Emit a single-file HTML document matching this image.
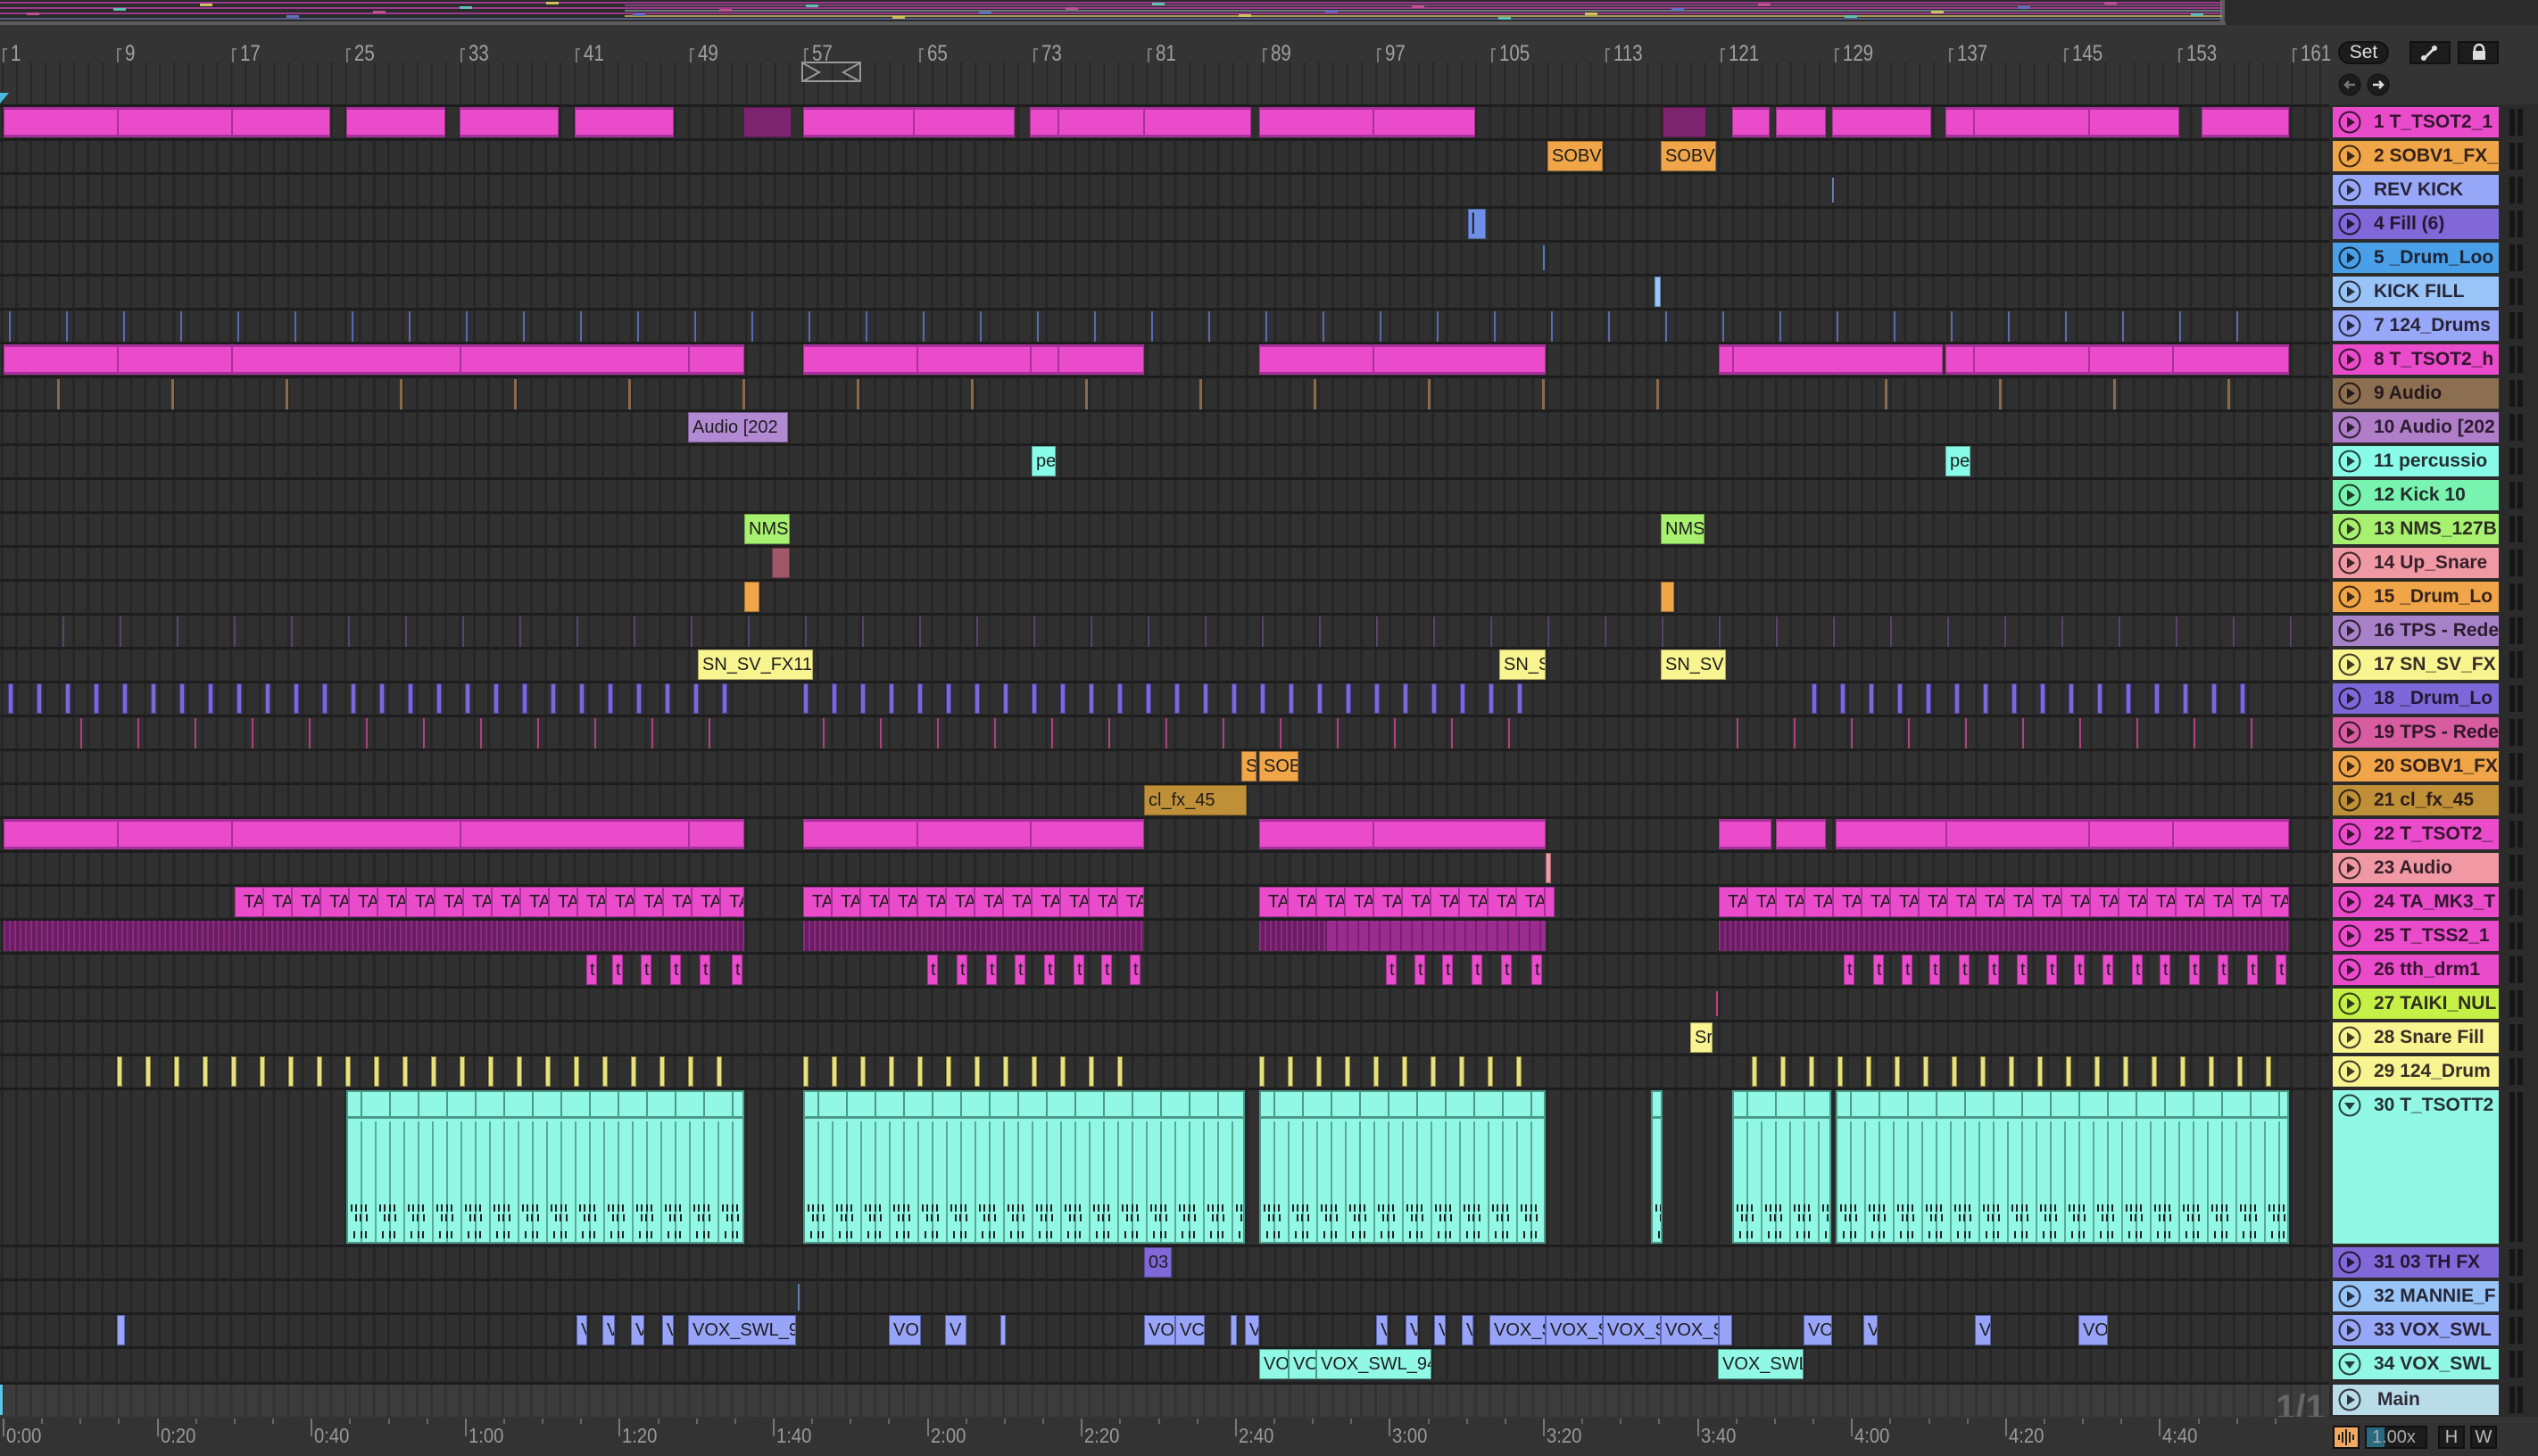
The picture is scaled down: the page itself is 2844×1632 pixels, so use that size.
<!DOCTYPE html>
<html><head><meta charset="utf-8">
<style>
*{margin:0;padding:0;box-sizing:border-box}
body{width:2844px;height:1632px;background:#2b2b2b;position:relative;overflow:hidden;font-family:"Liberation Sans",sans-serif}
.a{position:absolute}
.row{position:absolute;left:0;width:2610px;background-color:#303030;border-top:3px solid #1d1d1d;
 background-image:linear-gradient(90deg,#262626 0 3px,transparent 3px);background-size:16.04px 100%;background-position:1px 0}
.clip{position:absolute;overflow:hidden;white-space:nowrap;font-size:20px;color:#1c1c1c;line-height:32px;padding-left:4px;border:1px solid rgba(0,0,0,.3)}
.hd{position:absolute;left:2614px;width:186px;height:34px;font-weight:bold;font-size:21px;color:rgba(20,10,20,.85);line-height:34px;padding-left:46px;white-space:nowrap;overflow:hidden;letter-spacing:0}
.hd svg{position:absolute;left:5px;top:4px}
.mt{position:absolute;left:2812px;width:15px;height:30px;border-left:6px solid #161616;border-right:6px solid #161616}
.rn{position:absolute;top:46px;font-size:25px;color:#a0a0a0;transform:scaleX(.82);transform-origin:left}
.tk{position:absolute;width:2px;background:#777}
.tl{position:absolute;top:1596px;font-size:23px;color:#999;transform:scaleX(.88);transform-origin:left}
.btn{position:absolute;background:#1c1c1c;border:2px solid #111;color:#bbb;font-size:20px;text-align:center;line-height:22px}
</style></head><body>
<div class="a" style="left:0;top:0;width:2490px;height:24px;background:#2a2a2a"></div>
<div class="a" style="left:0;top:24px;width:2494px;height:4px;background:#5c5c5c"></div>
<div class="a" style="left:2488px;top:0;width:5px;height:26px;background:#5c5c5c;border-radius:0 0 6px 0"></div>
<div class="a" style="left:0;top:28px;width:2614px;height:90px;background:#343434"></div>
<div class="a" style="left:0;top:70px;width:2610px;height:47px;background-image:linear-gradient(90deg,#282828 0 2px,transparent 2px);background-size:16.04px 100%;background-position:2px 0"></div>
<svg class="a" style="left:898px;top:69px" width="68" height="24"><rect x="1" y="1" width="65" height="21" fill="none" stroke="#999" stroke-width="2"/><path d="M2 2 L20 12 L2 22 M65 2 L47 12 L65 22" fill="none" stroke="#999" stroke-width="2"/></svg>
<svg class="a" style="left:0;top:104px" width="10" height="12"><path d="M0 0 L10 0 L0 12Z" fill="#4ab8d8"/></svg>
<div class="a" style="left:2614px;top:28px;width:230px;height:89px;background:#343434"></div>
<div class="btn" style="left:2620px;top:46px;width:57px;height:26px;border-radius:13px;color:#ddd;font-size:21px">Set</div>
<div class="btn" style="left:2700px;top:46px;width:46px;height:26px"><svg width="40" height="22"><path d="M14 17 L24 7" stroke="#ddd" stroke-width="3"/><circle cx="13" cy="17" r="3" fill="#ddd"/><circle cx="25" cy="6" r="3" fill="#ddd"/></svg></div>
<div class="btn" style="left:2754px;top:46px;width:46px;height:26px"><svg width="40" height="22"><rect x="14" y="9" width="14" height="10" fill="#ddd"/><path d="M16 10 V7 a5 5 0 0 1 10 0 V10" fill="none" stroke="#ddd" stroke-width="2.5"/></svg></div>
<svg class="a" style="left:2620px;top:82px" width="60" height="27"><circle cx="13" cy="13" r="12" fill="#1c1c1c" stroke="#111"/><path d="M19 13 H8 M12 9 L8 13 L12 17" stroke="#777" stroke-width="2.5" fill="none"/><circle cx="45" cy="13" r="12" fill="#1c1c1c" stroke="#111"/><path d="M39 13 H50 M46 9 L50 13 L46 17" stroke="#ddd" stroke-width="2.5" fill="none"/></svg>
<div class="a" style="left:0;top:1549px;width:2610px;height:39px;background-color:#3c3c3c;border-top:3px solid #1d1d1d;background-image:linear-gradient(90deg,#333 0 3px,transparent 3px);background-size:16.04px 100%;background-position:1px 0"></div>
<div class="a" style="left:2550px;top:1556px;font-size:40px;font-weight:bold;color:#666">1/1</div>
<div class="a" style="left:0;top:1552px;width:3px;height:34px;background:#5ac8e8"></div>
<div class="a" style="left:0;top:1588px;width:2844px;height:44px;background:#333"></div>
<div class="a" style="left:2614px;top:1598px;width:30px;height:26px;background:#f0aa60;border:2px solid #111"><svg width="26" height="22"><path d="M5 8v6M9 5v12M13 2v18M17 5v12M21 8v6" stroke="#222" stroke-width="2"/></svg></div>
<div class="btn" style="left:2650px;top:1598px;width:70px;height:26px;color:#aaa;text-align:left;padding-left:6px"><span style="position:absolute;left:0;top:0;width:20px;height:22px;background:#2a6a80"></span><span style="position:relative">1.00x</span></div>
<div class="btn" style="left:2732px;top:1598px;width:30px;height:26px">H</div>
<div class="btn" style="left:2768px;top:1598px;width:30px;height:26px">W</div>
<script>
const B=document.body;
function el(h){B.insertAdjacentHTML('beforeend',h)}
const D=1.814;
const ovc=['#c040b0','#a05090','#c040b0','#8090a0','#c040b0','#d0c060','#6070a0'];
for(let i=0;i<7;i++){el(`<div class="a" style="left:${i%2?700:0}px;top:${2+i*3}px;width:${i%2?1790:2490}px;height:2px;background:${ovc[i]};opacity:.75"></div>`)}
for(let x=30;x<2480;x+=97)el(`<div class="a" style="left:${x}px;top:${(x*7)%18+2}px;width:14px;height:3px;background:${['#d0c060','#6070c0','#c05090','#60c0b0'][x%4]}"></div>`);
for(let n=1;n<=161;n+=8){let x=3+(n-1)*16.04;el(`<div class="tk" style="left:${x}px;top:54px;height:16px"></div><div class="tk" style="left:${x}px;top:54px;width:5px;height:2px"></div><div class="rn" style="left:${x+9}px">${n}</div>`)}
const tops=[];let y=117;
for(let i=1;i<=34;i++){let h=i==30?176:38;tops[i]=y;el(`<div class="row" style="top:${y}px;height:${h}px"></div>`);y+=h}
function C(t,x1,x2,c,l,ex){let top=tops[t]+3;let h=(t==30?172:34);el(`<div class="clip" style="left:${x1}px;top:${top}px;width:${x2-x1}px;height:${h}px;background:${c};${ex||''}">${l||''}</div>`)}
function Cd(t,a,b,c,l,ex){C(t,Math.round(a*D),Math.round(b*D),c,l,ex)}
const M='#ea4bcb',MB='border-top:3px solid #a8309a;border-bottom:3px solid #a8309a;';
[[2,204],[214,275],[284,345],[355,416],[496,627],[636,773],[778,911],[1070,1093],[1097,1128],[1132,1193],[1202,1346],[1360,1414]].forEach(r=>Cd(1,r[0],r[1],M,'',MB));
Cd(1,459,489,'#7d246f');Cd(1,1027,1054,'#7d246f');
[72,143,564,653,706,848,1219,1290].forEach(x=>el(`<div class="a" style="left:${x*D}px;top:${tops[1]+3}px;width:2px;height:34px;background:#a8309a"></div>`));
Cd(2,956,990,'#f0a548','SOBV1');Cd(2,1026,1060,'#f0a548','SOBV1');
el(`<div class="a" style="left:${1132*D}px;top:${tops[3]+6}px;width:2px;height:28px;background:#6a7ab0"></div>`);
Cd(4,907,918,'#7090e8','▏');
el(`<div class="a" style="left:${953*D}px;top:${tops[5]+6}px;width:2px;height:28px;background:#4a80c0"></div>`);
Cd(6,1022,1026,'#98c4f8');
for(let x=10;x<2570;x+=64)el(`<div class="a" style="left:${x}px;top:${tops[7]+4}px;width:2px;height:34px;background:#5a6ab0"></div>`);
[[2,460],[496,707],[778,955],[1062,1200],[1202,1414]].forEach(r=>Cd(8,r[0],r[1],M,'',MB));
[72,143,284,425,566,636,653,848,1070,1219,1290,1342].forEach(x=>el(`<div class="a" style="left:${x*D}px;top:${tops[8]+3}px;width:2px;height:34px;background:#a8309a"></div>`));
for(let x=64;x<2570;x+=128)if(x<1900||x>2000)el(`<div class="a" style="left:${x}px;top:${tops[9]+4}px;width:3px;height:34px;background:#8a6a48"></div>`);
Cd(10,425,487,'#b28ad4','Audio [202');
Cd(11,637,652,'#88fce8','pe');Cd(11,1202,1217,'#88fce8','pe');
Cd(13,460,488,'#a8f070','NMS');Cd(13,1026,1053,'#a8f070','NMS');
Cd(14,477,488,'#a05868');
Cd(15,460,469,'#f0a548');Cd(15,1026,1034,'#f0a548');
for(let x=70;x<2570;x+=64)el(`<div class="a" style="left:${x}px;top:${tops[16]+4}px;width:2px;height:34px;background:#5a4270"></div>`);
Cd(17,431,502,'#f8f490','SN_SV_FX11');Cd(17,926,955,'#f8f490','SN_S');Cd(17,1026,1066,'#f8f490','SN_SV');
[[9,810],[900,1710],[2030,2540]].forEach(r=>{for(let x=r[0];x<=r[1];x+=32)C(18,x,x+6,'#7c68d8','','border-color:#4a3a90')});
for(let x=90;x<2570;x+=64)if(!(x>840&&x<900)&&!(x>1720&&x<1900))el(`<div class="a" style="left:${x}px;top:${tops[19]+4}px;width:2px;height:34px;background:#b04080"></div>`);
Cd(20,767,776,'#f0a548','S');Cd(20,778,802,'#f0a548','SOB');
Cd(21,707,770,'#c09038','cl_fx_45');
[[2,460],[496,707],[778,955],[1062,1094],[1097,1128],[1134,1414]].forEach(r=>Cd(22,r[0],r[1],M,'',MB));
[72,143,284,425,566,636,848,1202,1290,1342].forEach(x=>el(`<div class="a" style="left:${x*D}px;top:${tops[22]+3}px;width:2px;height:34px;background:#a8309a"></div>`));
Cd(23,955,957,'#f098a4');
[[263,834],[900,1282],[1411,1732],[1926,2565]].forEach(r=>{for(let x=r[0];x<r[1];x+=32)C(24,x,Math.min(x+32,r[1]),M,'TA','border-color:#a8309a;padding-left:9px')});
const ST='repeating-linear-gradient(90deg,#8a2a80 0 2px,#6a1e62 2px 6px)';
[[2,460],[496,707],[778,955],[1062,1414]].forEach(r=>Cd(25,r[0],r[1],ST,'','border:none'));
Cd(25,820,955,'repeating-linear-gradient(90deg,#9a2c90 0 10px,#7a2070 10px 12px)','','border:none');
[362,378,396,414,432,452,573,591,609,627,645,663,680,698,856,874,891,909,927,946,1139,1157,1175,1192,1210,1228,1246,1264,1281,1299,1317,1334,1352,1370,1388,1406].forEach(x=>C(26,Math.round(x*D),Math.round(x*D)+12,M,'t','padding-left:3px;border-color:#a8309a'));
el(`<div class="a" style="left:${1060*D}px;top:${tops[27]+6}px;width:2px;height:28px;background:#c04080"></div>`);
Cd(28,1044,1058,'#f8f490','Sr');
[[131,810],[900,1260],[1411,1710],[1963,2540]].forEach(r=>{for(let x=r[0];x<=r[1];x+=32)C(29,x,x+6,'#e8e27e','','border-color:#8a8440')});
const MT='#90f8e4';
function big(a,b){let x1=Math.round(a*D),x2=Math.round(b*D),t=tops[30]+3;
el(`<div class="a" style="left:${x1}px;top:${t}px;width:${x2-x1}px;height:172px;background:${MT};border:2px solid #4c9a8a;overflow:hidden">
<div class="a" style="left:0;top:0;right:0;height:30px;border-bottom:3px solid #4c9a8a;background-image:linear-gradient(90deg,#4c9a8a 0 2px,transparent 2px);background-size:32px 100%;background-position:14px 0"></div>
<div class="a" style="left:0;top:33px;right:0;bottom:0;background-image:linear-gradient(90deg,#5aa898 0 2px,transparent 2px);background-size:16px 100%;background-position:14px 0"></div>
<div class="a" style="left:0;top:126px;right:0;height:8px;background-image:linear-gradient(90deg,#222 0 2px,transparent 2px 5px,#222 5px 7px,transparent 7px 11px,#222 11px 13px,transparent 13px 16px,#222 16px 18px,transparent 18px 32px);background-size:32px 8px;background-position:3px 0"></div>
<div class="a" style="left:0;top:137px;right:0;height:8px;background-image:linear-gradient(90deg,#222 0 2px,transparent 2px 5px,#222 5px 7px,transparent 7px 12px,#222 12px 14px,transparent 14px 32px);background-size:32px 8px;background-position:8px 0"></div>
<div class="a" style="left:0;top:156px;right:0;height:8px;background-image:linear-gradient(90deg,#222 0 2px,transparent 2px 8px,#222 8px 10px,transparent 10px 13px,#222 13px 15px,transparent 15px 32px);background-size:32px 8px;background-position:6px 0"></div>
</div>`)}
[[214,460],[496,769],[778,955],[1020,1027],[1070,1131],[1134,1414]].forEach(r=>big(r[0],r[1]));
Cd(31,707,724,'#8068d8','03');
el(`<div class="a" style="left:${493*D}px;top:${tops[32]+6}px;width:2px;height:30px;background:#5a80b0"></div>`);
const V='#98a4f8';
[[72,77,''],[356,363,'V'],[372,380,'V'],[390,398,'V'],[409,416,'V'],[425,492,'VOX_SWL_9'],[549,569,'VO'],[584,597,'V'],[618,621,''],[707,726,'VO'],[726,744,'VC'],[760,764,''],[769,778,'V'],[850,857,'V'],[868,876,'V'],[886,893,'V'],[903,910,'V'],[920,955,'VOX_S'],[955,990,'VOX_S'],[990,1026,'VOX_S'],[1026,1062,'VOX_S'],[1062,1070,''],[1114,1132,'VO'],[1151,1160,'V'],[1220,1230,'V'],[1284,1302,'VO']].forEach(r=>Cd(33,r[0],r[1],V,r[2],'border-color:#5a64b0'));
[[778,796,'VO'],[796,813,'VO'],[813,884,'VOX_SWL_94'],[1061,1114,'VOX_SWL']].forEach(r=>Cd(34,r[0],r[1],MT,r[2],'border-color:#4c9a8a'));
const H=[['1 T_TSOT2_1','#ea4bcb'],['2 SOBV1_FX_','#f0a548'],['REV KICK','#98a8f8'],['4 Fill  (6)','#8068d8'],['5 _Drum_Loo','#4aa0e8'],['KICK FILL','#98c4f8'],['7 124_Drums','#98a8f8'],['8 T_TSOT2_h','#ea4bcb'],['9 Audio','#8c6e50'],['10 Audio [202','#b07ec8'],['11 percussio','#88fce8'],['12 Kick 10','#78f4b0'],['13 NMS_127B','#a8f070'],['14 Up_Snare','#f098a4'],['15 _Drum_Lo','#f0a548'],['16 TPS - Rede','#a882c8'],['17 SN_SV_FX','#f8f490'],['18 _Drum_Lo','#7c68d8'],['19 TPS - Rede','#d85ca0'],['20 SOBV1_FX','#f0a548'],['21 cl_fx_45','#c09038'],['22 T_TSOT2_','#ea4bcb'],['23 Audio','#f098a4'],['24 TA_MK3_T','#ea4bcb'],['25 T_TSS2_1','#ea4bcb'],['26 tth_drm1','#ea4bcb'],['27 TAIKI_NUL','#c4f048'],['28 Snare Fill','#f8f490'],['29 124_Drum','#f8f490'],['30 T_TSOTT2','#90f8e4'],['31 03 TH FX','#8068d8'],['32 MANNIE_F','#98c4f8'],['33 VOX_SWL','#98a8f8'],['34 VOX_SWL','#90f8e4']];
function icon(down){return `<svg width="28" height="28"><circle cx="14" cy="13" r="11.5" fill="none" stroke="rgba(0,0,0,.75)" stroke-width="2"/>${down?'<path d="M8 10 H20 L14 18Z" fill="rgba(0,0,0,.75)"/>':'<path d="M11 7 L20 13 L11 19Z" fill="rgba(0,0,0,.75)"/>'}</svg>`}
H.forEach((h,i)=>{let t=tops[i+1]+3,hh=i==29?172:34;
el(`<div class="hd" style="top:${t}px;height:${hh}px;background:${h[1]}">${icon(i==29||i==33)}${h[0]}</div><div class="mt" style="top:${t+2}px;height:${hh-4}px"></div>`)});
el(`<div class="hd" style="top:1552px;background:#b8dce8;padding-left:50px">${icon(false)}Main</div><div class="mt" style="top:1554px"></div>`);
const tl=['0:00','0:20','0:40','1:00','1:20','1:40','2:00','2:20','2:40','3:00','3:20','3:40','4:00','4:20','4:40'];
tl.forEach((s,i)=>{let x=3+i*172.6;el(`<div class="tk" style="left:${x}px;top:1590px;height:20px"></div><div class="tl" style="left:${x+4}px">${s}</div>`);
for(let k=1;k<4;k++)el(`<div class="tk" style="left:${x+k*43.15}px;top:1590px;height:6px;background:#666"></div>`)});
</script>
</body></html>
